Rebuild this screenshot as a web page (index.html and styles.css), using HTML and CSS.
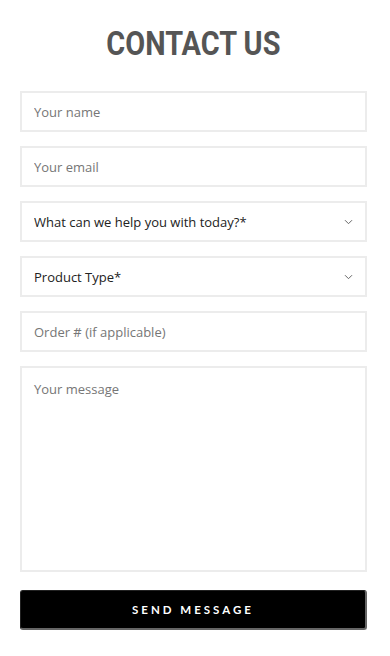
FILE: index.html
```html
<!DOCTYPE html>
<html>
<head>
  <title>Contact Us</title>
  <link rel="stylesheet" href="styles.css">
</head>
<body>
<div class="content">
  <h1 class="title"><span>CONTACT US</span></h1>
  <form class="contact-form" method="POST" action="/">
    <input class="field" type="text" name="name" placeholder="Your name">
    <input class="field" type="email" name="email" placeholder="Your email">
    <div class="select-wrap">
      <select class="field" name="topic">
        <option>What can we help you with today?*</option>
      </select>
      <svg class="chevron" width="9" height="6" viewBox="0 0 9 6"><path d="M1 1.2l3.5 3.5 3.5-3.5" fill="none" stroke="#666" stroke-width="1"/></svg>
    </div>
    <div class="select-wrap">
      <select class="field" name="product">
        <option>Product Type*</option>
      </select>
      <svg class="chevron" width="9" height="6" viewBox="0 0 9 6"><path d="M1 1.2l3.5 3.5 3.5-3.5" fill="none" stroke="#666" stroke-width="1"/></svg>
    </div>
    <input class="field" type="text" name="order" placeholder="Order # (if applicable)">
    <textarea class="field message" name="message" placeholder="Your message"></textarea>
    <button class="send" type="submit">SEND MESSAGE</button>
  </form>
</div>
</body>
</html>
```

FILE: styles.css
```css
/* Reset default margin for the body */
body {
  margin: 0;
  background-color: #ffffff;
  font-family: "Open Sans", "Noto Sans", sans-serif;
}

.content {
  padding: 23px 23px 0 20px;
}

/* Page heading */
.title {
  margin: 0 0 28px 0;
  text-align: center;
  font-family: Roboto, sans-serif;
  font-weight: 700;
  font-size: 34px;
  line-height: 40px;
  color: #555555;
}

.title span {
  display: inline-block;
  transform: scaleX(0.85);
}

.contact-form {
  display: flex;
  flex-direction: column;
  gap: 14px;
}

/* Shared style for inputs, selects and the textarea */
.field {
  box-sizing: border-box;
  width: 100%;
  height: 41px;
  margin: 0;
  padding: 0 12px;
  border: 2px solid #ececec;
  border-radius: 0;
  background-color: #ffffff;
  font-family: "Open Sans", "Noto Sans", sans-serif;
  font-size: 13px;
  color: #222222;
  outline: none;
}

.field::placeholder {
  color: #767676;
}

select.field {
  appearance: none;
  -webkit-appearance: none;
}

.select-wrap {
  position: relative;
}

.chevron {
  position: absolute;
  right: 14px;
  top: 18px;
}

.message {
  height: 206px;
  padding-top: 12px;
  resize: none;
}

/* Submit button */
.send {
  margin-top: 4px;
  height: 40px;
  border: 1px solid #222;
  border-right: 2px solid #666;
  border-bottom: 2px solid #666;
  border-radius: 3px;
  background-color: #000000;
  color: #ffffff;
  font-family: Lato, sans-serif;
  font-weight: 700;
  font-size: 11.5px;
  letter-spacing: 3px;
  cursor: pointer;
}
```
